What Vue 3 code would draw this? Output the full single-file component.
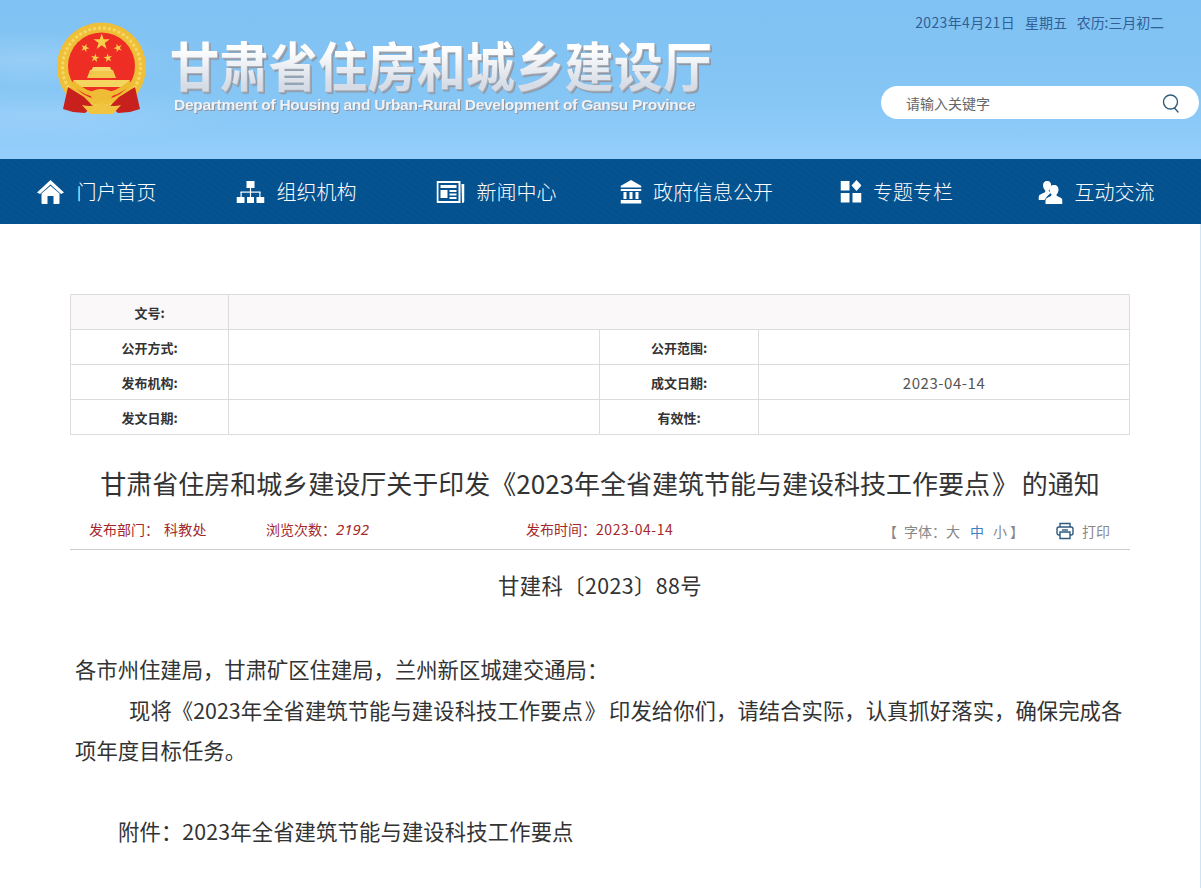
<script setup>
const navItems = [
  { key: 'home', label: '门户首页' },
  { key: 'org', label: '组织机构' },
  { key: 'news', label: '新闻中心' },
  { key: 'gov', label: '政府信息公开' },
  { key: 'topic', label: '专题专栏' },
  { key: 'users', label: '互动交流' }
]
const starPts = (cx, cy, r, rot = 0) => {
  const pts = []
  for (let i = 0; i < 10; i++) {
    const rad = i % 2 ? r * 0.382 : r
    const a = (-90 + rot + i * 36) * Math.PI / 180
    pts.push((cx + rad * Math.cos(a)).toFixed(2) + ',' + (cy + rad * Math.sin(a)).toFixed(2))
  }
  return pts.join(' ')
}
const stars = [
  { x: 45.7, y: 21, r: 8.5, rot: 0 },
  { x: 29, y: 27, r: 4.5, rot: 20 },
  { x: 62, y: 27, r: 4.5, rot: -20 },
  { x: 39, y: 37, r: 4.5, rot: 10 },
  { x: 52, y: 37, r: 4.5, rot: -10 }
].map(s => starPts(s.x, s.y, s.r, s.rot))
</script>

<template>
  <div class="page">
    <header class="top">
      <svg class="emblem" width="92" height="95" viewBox="0 0 92 95">
        <circle cx="45.5" cy="46" r="44.5" fill="#eebf37"/>
        <circle cx="45.5" cy="46" r="39" fill="none" stroke="#f7d765" stroke-width="3" stroke-dasharray="3 2"/>
        <circle cx="45.5" cy="45" r="33.5" fill="#ee2d24"/>
        <polygon v-for="(pts, i) in stars" :key="i" :points="pts" fill="#f6d04a"/>
        <path d="M34 49 H57 L60 57 H31 Z" fill="#f2c74c"/>
        <path d="M37 46 H54 L56 50 H35 Z" fill="#f6d768"/>
        <path d="M17 59 H74 L70 66 L21 66 Z" fill="#f5d460"/>
        <path d="M12 66 L7 88 L17 91 L29 92 L37 85 L28 76 Z" fill="#c8201c"/>
        <path d="M79 66 L84 88 L74 91 L62 92 L54 85 L63 76 Z" fill="#c8201c"/>
        <path d="M14 62 Q45 92 77 62 L73 60 Q45 84 18 60 Z" fill="#eebb2f"/>
        <path d="M33 72 Q45 64 58 72 L54 79 H37 Z" fill="#efbd35"/>
        <path d="M26 84 Q38 87 45.5 81 Q53 87 65 84 L57 93 H34 Z" fill="#f0c440"/>
      </svg>
      <div class="brand">
        <div class="brand-cn">甘肃省住房和城乡建设厅</div>
        <div class="brand-en">Department of Housing and Urban-Rural Development of Gansu Province</div>
      </div>
      <div class="tools">
        <div class="date">
          <span class="d1">2023年4月21日</span><span>星期五</span><span>农历:三月初二</span>
        </div>
        <div class="search">
          <span class="placeholder">请输入关键字</span>
          <svg width="20" height="20" viewBox="0 0 20 20" fill="none" stroke="#2f5d80" stroke-width="1.4">
            <circle cx="9.5" cy="9" r="7"/>
            <path d="M13.5 15 L17 19" stroke-linecap="round"/>
          </svg>
        </div>
      </div>
    </header>

    <nav class="nav">
      <a v-for="item in navItems" :key="item.key" class="nav-item">
        <svg v-if="item.key === 'home'" width="28" height="26" viewBox="0 0 28 26" fill="#fff">
          <path d="M14 1 L27.5 13.5 L24.5 15 L14 5.5 L3.5 15 L.5 13.5 Z"/>
          <path d="M5 14.5 L14 6.8 L23 14.5 V24 Q23 25 22 25 H17 V17 H11 V25 H6 Q5 25 5 24 Z"/>
        </svg>
        <svg v-else-if="item.key === 'org'" width="28" height="24" viewBox="0 0 28 24" fill="#fff">
          <rect x="10" y="1" width="8" height="7"/>
          <rect x="13.4" y="8" width="1.2" height="9"/>
          <rect x="4" y="11.5" width="20" height="1.2"/>
          <rect x="4" y="12" width="1.2" height="5"/>
          <rect x="22.8" y="12" width="1.2" height="5"/>
          <rect x="0" y="17" width="8" height="6"/>
          <rect x="10.5" y="17" width="7" height="6"/>
          <rect x="20" y="17" width="8" height="6"/>
        </svg>
        <svg v-else-if="item.key === 'news'" width="28" height="22" viewBox="0 0 28 22" fill="#fff">
          <path d="M0 0 H24 V22 H1 Q0 22 0 21 Z M2 2 V20 H22 V2 Z" fill-rule="evenodd"/>
          <path d="M25 3 H28 V20 Q28 22 25.5 22 Z"/>
          <rect x="4" y="4" width="16" height="3"/>
          <rect x="4" y="9" width="7" height="8"/>
          <rect x="13" y="9" width="7" height="2"/>
          <rect x="13" y="12.5" width="7" height="2"/>
          <rect x="13" y="16" width="7" height="2"/>
        </svg>
        <svg v-else-if="item.key === 'gov'" width="21" height="24" viewBox="0 0 21 24" fill="#fff">
          <path d="M10.5 0 L21 6 V7.5 H0 V6 Z"/>
          <rect x="0" y="9" width="21" height="2"/>
          <rect x="3" y="12" width="3" height="7"/>
          <rect x="9" y="12" width="3" height="7"/>
          <rect x="15" y="12" width="3" height="7"/>
          <rect x="0" y="20" width="21" height="3.5"/>
        </svg>
        <svg v-else-if="item.key === 'topic'" width="21" height="23" viewBox="0 0 21 23" fill="#fff">
          <rect x="0" y="1" width="9" height="9.5"/>
          <path d="M16 0 L21 5.5 L16 11 L11 5.5 Z"/>
          <rect x="0" y="13" width="9" height="9.5"/>
          <rect x="12" y="13" width="9" height="9.5"/>
        </svg>
        <svg v-else width="24" height="24" viewBox="0 0 24 24" fill="#fff">
          <path d="M8.5 1 C11.5 1 13 3 12.5 6 C12.2 8 11.3 9.3 10.2 10.3 C10.2 11.5 11 12 12.5 12.5 L8.5 16.5 L6 20 H0 V17 C0 15 2 14 5.5 12.7 C6.5 12.3 7 11.5 6.8 10.4 C5.5 9.2 4.6 7.5 4.5 5.5 C4.4 3 6 1 8.5 1 Z"/>
          <path d="M15.5 5 C18.5 5 20.3 7 20 10 C19.8 12 19 13.5 18 14.5 C17.9 15.7 18.5 16.2 20 16.8 C22.5 17.8 24 18.8 24 20.5 V24 H7 V20.5 C7 18.8 8.7 17.8 11 16.8 C12.5 16.2 13.1 15.7 13 14.5 C12 13.5 11.2 12 11 10 C10.7 7 12.5 5 15.5 5 Z"/>
        </svg>
        <span>{{ item.label }}</span>
      </a>
    </nav>

    <main class="content">
      <table class="info">
        <colgroup><col class="c1"><col class="c2"><col class="c3"><col class="c4"></colgroup>
        <tbody>
          <tr class="shade"><th>文号:</th><td colspan="3"></td></tr>
          <tr><th>公开方式:</th><td></td><th>公开范围:</th><td></td></tr>
          <tr><th>发布机构:</th><td></td><th>成文日期:</th><td class="val">2023-04-14</td></tr>
          <tr><th>发文日期:</th><td></td><th>有效性:</th><td></td></tr>
        </tbody>
      </table>

      <h1 class="title">甘肃省住房和城乡建设厅关于印发《2023年全省建筑节能与建设科技工作要点<span class="close">》</span>的通知</h1>

      <div class="meta">
        <span class="m1">发布部门：<span class="dept">科教处</span></span>
        <span class="m2">浏览次数：<em>2192</em></span>
        <span class="m3">发布时间：<span class="pubdate">2023-04-14</span></span>
        <span class="fontsize">
          <span class="fs-open">【</span><span>字体：大</span><b>中</b><span class="fs-small">小</span><span class="fs-close">】</span>
        </span>
        <span class="print">
          <svg width="18" height="18" viewBox="0 0 18 18" fill="none" stroke="#2d5a80" stroke-width="1.4">
            <path d="M4 5 V1.5 H14 V5"/>
            <rect x="1" y="5" width="16" height="8" rx="2"/>
            <path d="M4 10 V16.5 H14 V10 Z" fill="#fff"/>
            <path d="M6 8 H12"/>
          </svg>
          打印
        </span>
      </div>

      <article class="body">
        <p class="docno">甘建科〔2023〕88号</p>
        <p class="blank">&nbsp;</p>
        <p>各市州住建局，甘肃矿区住建局，兰州新区城建交通局：</p>
        <p class="lead">现将《2023年全省建筑节能与建设科技工作要点<span class="close">》</span>印发给你们，请结合实际，认真抓好落实，确保完成各项年度目标任务。</p>
        <p class="gap">&nbsp;</p>
        <p class="attach">附件：2023年全省建筑节能与建设科技工作要点</p>
      </article>
    </main>
  </div>
</template>

<style>
html, body { margin: 0; background: #fff; overflow: hidden; }
</style>

<style scoped>
.page {
  width: 1201px;
  height: 888px;
  overflow: hidden;
  background: linear-gradient(90deg, #fff 1200px, #cfe3f5 1200px);
  font-family: "Noto Sans CJK SC", "Noto Sans", sans-serif;
  color: #333;
}
.top {
  height: 159px;
  display: flex;
  box-sizing: border-box;
  padding-left: 56px;
  background:
    radial-gradient(ellipse 150px 30px at 30px 60px, rgba(255,255,255,.16), transparent),
    radial-gradient(ellipse 200px 30px at 40px 115px, rgba(255,255,255,.12), transparent),
    linear-gradient(180deg, #7fc1f2 0%, #85c6f5 60%, #94cefc 100%);
}
.emblem { flex: none; margin-top: 21px; filter: blur(.35px); }
.brand { margin: 36px 0 0 22px; width: 560px; }
.brand-cn {
  font-size: 49px;
  line-height: 56px;
  font-weight: 700;
  white-space: nowrap;
  letter-spacing: .3px;
  background: linear-gradient(180deg, #fff 25%, #d6dce6 85%);
  -webkit-background-clip: text;
  background-clip: text;
  color: transparent;
  filter: drop-shadow(1px 1px 0 #a9afb9) drop-shadow(1px 1px 0 #8d939e);
  transform: scaleY(1.1);
}
.brand-en {
  margin: 3px 0 0 4px;
  font: 700 15.5px/20px "Liberation Sans", sans-serif;
  white-space: nowrap;
  letter-spacing: -.28px;
  color: #eef2f7;
  filter: drop-shadow(1px 1px 0 #8d939e);
}
.tools { margin-left: auto; width: 320px; flex: none; display: flex; flex-direction: column; }
.date {
  margin-top: 11px;
  padding-right: 37px;
  display: flex;
  justify-content: flex-end;
  gap: 10px;
  font-size: 14px;
  line-height: 22px;
  color: #2f5f96;
  letter-spacing: -.1px;
}
.d1 { letter-spacing: .35px; }
.search {
  margin: 53px 2px 0 0;
  height: 33px;
  border-radius: 17px;
  background: #fff;
  display: flex;
  align-items: center;
  justify-content: space-between;
  padding: 0 18px 0 25px;
}
.placeholder { font-size: 14px; color: #666; }
.search svg { margin-top: 1px; }
.nav {
  height: 65px;
  display: grid;
  grid-template-columns: repeat(6, 200px);
  background: #03518f;
  background-image: repeating-linear-gradient(35deg, rgba(255,255,255,.012) 0 2px, transparent 2px 5px);
}
.nav-item {
  display: flex;
  align-items: center;
  justify-content: center;
  gap: 12px;
  color: #fff;
  font-size: 20px;
  font-weight: 300;
  transform: translateX(-3.5px);
}
.content { width: 1060px; margin-left: 70px; }
.info {
  margin-top: 70px;
  width: 1059px;
  border-collapse: collapse;
  table-layout: fixed;
}
.c1 { width: 158px; }
.c2 { width: 371px; }
.c3 { width: 159px; }
.c4 { width: 371px; }
.info th, .info td {
  height: 35px;
  padding: 0;
  border: 1px solid #dcdcdc;
  text-align: center;
  box-sizing: border-box;
}
.info th { font-size: 13px; font-weight: 700; color: #333; }
.shade th, .shade td { background: #faf8f8; }
.val { font-size: 15px; color: #555; letter-spacing: .55px; }
.title {
  margin: 26px 0 0;
  text-align: center;
  font-size: 26px;
  line-height: 44px;
  font-weight: 400;
  color: #333;
  white-space: nowrap;
}
.close { margin: 0 .14em 0 .08em; }
.meta {
  margin-top: 5px;
  height: 40px;
  box-sizing: border-box;
  border-bottom: 1px solid #ccc;
  display: flex;
  align-items: center;
  font-size: 14px;
  color: #a5282c;
  padding-bottom: 2px;
}
.m1 { margin-left: 19px; width: 177px; white-space: nowrap; }
.dept { margin-left: 5px; letter-spacing: .3px; }
.m2 { width: 260px; }
.m2 em { font: italic 15px "Noto Sans", sans-serif; }
.m3 { white-space: nowrap; }
.pubdate { letter-spacing: .55px; }
.fontsize { margin-left: auto; color: #888; font-size: 14px; padding-top: 4px; white-space: nowrap; display: flex; }
.fs-open { margin-right: 7px; }
.fontsize b { font-weight: 400; color: #3f82c4; margin-left: 10px; }
.fs-small { margin-left: 9px; }
.fs-close { margin-left: 3px; }
.print { margin: 0 20px 0 32px; display: flex; align-items: center; gap: 8px; color: #888; padding-top: 4px; }
.body { padding: 0 5px; font-size: 21.33px; line-height: 40.6px; color: #333; }
.body p { margin: 0; }
.docno { margin-top: 15px !important; text-align: center; letter-spacing: .4px; }
.lead { text-indent: 54px; letter-spacing: .06px; }
.attach { padding-left: 43px; letter-spacing: .13px; }
.blank { height: 43.6px; }
.gap { height: 40px; }
</style>
